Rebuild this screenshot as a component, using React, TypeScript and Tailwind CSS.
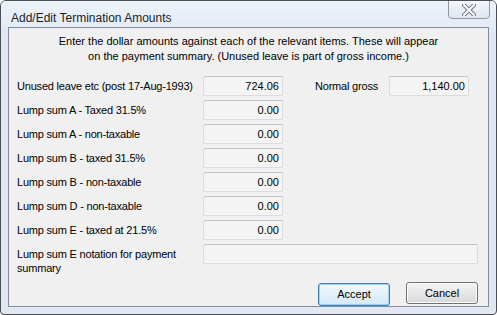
import React from "react";

const rows = [
  { label: "Unused leave etc (post 17-Aug-1993)", value: "724.06" },
  { label: "Lump sum A - Taxed 31.5%", value: "0.00" },
  { label: "Lump sum A - non-taxable", value: "0.00" },
  { label: "Lump sum B - taxed 31.5%", value: "0.00" },
  { label: "Lump sum B - non-taxable", value: "0.00" },
  { label: "Lump sum D - non-taxable", value: "0.00" },
  { label: "Lump sum E - taxed at 21.5%", value: "0.00" },
];

function Field({ value, className = "" }: { value: string; className?: string }) {
  return (
    <div
      className={`h-[20px] flex items-center justify-end pr-[3px] bg-[#f4f4f4] border border-[#dcdcdc] border-t-[#c2c2c2] rounded-[2px] ${className}`}
    >
      {value}
    </div>
  );
}

function CloseGlyph() {
  return (
    <svg width="14" height="12" viewBox="0 0 14 12">
      <path d="M2 1 L12 11 M12 1 L2 11" stroke="#6d7480" strokeWidth="4" strokeLinecap="square" />
      <path d="M2 1 L12 11 M12 1 L2 11" stroke="#ffffff" strokeWidth="2" strokeLinecap="square" />
    </svg>
  );
}

export default function App() {
  return (
    <div
      className="w-[497px] h-[315px] bg-[#dfe8f3] border border-[#4b4f55] rounded-t-[6px] rounded-b-[4px] flex flex-col text-[11px] text-black overflow-hidden"
      style={{ fontFamily: '"Liberation Sans", Arial, sans-serif' }}
    >
      {/* title bar */}
      <div className="h-[28px] flex items-start bg-gradient-to-b from-[#eef3f9] to-[#e3ebf5]">
        <div className="pl-[10px] pt-[8px] text-[12px] text-[#1e1e1e]">Add/Edit Termination Amounts</div>
        <div className="ml-auto mr-[6px] w-[42px] h-[19px] -mt-px flex items-center justify-center border border-[#8e99a8] rounded-b-[4px] bg-gradient-to-b from-[#f4f7fb] to-[#dfe6ef]">
          <CloseGlyph />
        </div>
      </div>

      {/* client area */}
      <div className="flex-1 mx-[7px] mb-[7px] bg-[#f0f0f0] border border-[#848d99] flex flex-col">
        <div className="pt-[6px] text-center leading-[15px]">
          Enter the dollar amounts against each of the relevant items. These will appear
          <br />
          on the payment summary. (Unused leave is part of gross income.)
        </div>

        <div className="mt-[12px] pl-[8px] flex flex-col gap-[4px]">
          {rows.map((r, i) => (
            <div key={r.label} className="flex items-center h-[20px]">
              <div className="w-[186px] tracking-[-0.2px]">{r.label}</div>
              <Field value={r.value} className="w-[80px]" />
              {i === 0 && (
                <>
                  <div className="ml-[32px] w-[74px] tracking-[-0.2px]">Normal gross</div>
                  <Field value="1,140.00" className="w-[80px]" />
                </>
              )}
            </div>
          ))}
          <div className="flex items-start">
            <div className="w-[186px] pt-[3px] pr-[10px] leading-[14px] tracking-[-0.2px]">
              Lump sum E notation for payment summary
            </div>
            <Field value="" className="w-[275px]" />
          </div>
        </div>

        <div className="mt-[7px] pr-[10px] flex justify-end items-start gap-[16px]">
          <button className="w-[72px] h-[23px] mt-px rounded-[3px] border border-[#3c7fb1] bg-gradient-to-b from-[#f2f9fd] to-[#d4e9f7] shadow-[inset_0_0_0_1px_#9ed0f0]">
            Accept
          </button>
          <button className="w-[72px] h-[22px] rounded-[3px] border border-[#707070] bg-gradient-to-b from-[#f4f4f4] to-[#d8d8d8] shadow-[inset_0_0_0_1px_#fcfcfc]">
            Cancel
          </button>
        </div>
      </div>
    </div>
  );
}
